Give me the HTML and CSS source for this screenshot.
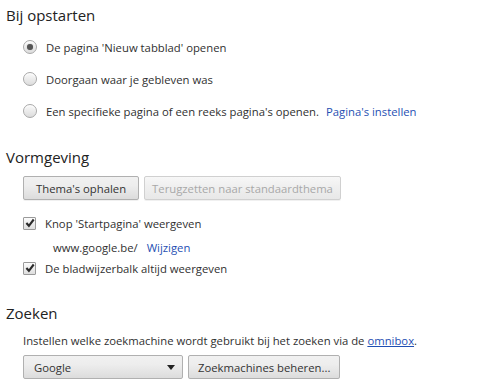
FILE: index.html
```html
<!DOCTYPE html>
<html lang="nl">
<head>
    <meta charset="UTF-8">
    <meta name="viewport" content="width=device-width, initial-scale=1.0">
    <title>Instellingen</title>
    <link rel="stylesheet" href="styles.css">
</head>
<body>
    <div class="settings">

        <section class="section section-startup">
            <h3 class="section-title">Bij opstarten</h3>
            <div class="section-body">
                <label class="radio-row">
                    <input type="radio" name="startup" checked>
                    <span>De pagina 'Nieuw tabblad' openen</span>
                </label>
                <label class="radio-row">
                    <input type="radio" name="startup">
                    <span>Doorgaan waar je gebleven was</span>
                </label>
                <label class="radio-row">
                    <input type="radio" name="startup">
                    <span>Een specifieke pagina of een reeks pagina's openen.</span>
                    <a class="link" href="#">Pagina's instellen</a>
                </label>
            </div>
        </section>

        <section class="section section-appearance">
            <h3 class="section-title">Vormgeving</h3>
            <div class="section-body">
                <div class="button-row">
                    <button class="btn">Thema's ophalen</button>
                    <button class="btn btn-reset" disabled>Terugzetten naar standaardthema</button>
                </div>
                <label class="check-row">
                    <span class="checkbox">
                        <svg width="10" height="10" viewBox="0 0 10 10"><path d="M1.4 5.0 L3.9 7.8 L8.7 1.5" fill="none" stroke="#2a2a2a" stroke-width="2.1"/></svg>
                    </span>
                    <span>Knop 'Startpagina' weergeven</span>
                </label>
                <div class="home-url">
                    <span>www.google.be/</span>
                    <a class="link" href="#">Wijzigen</a>
                </div>
                <label class="check-row check-row-last">
                    <span class="checkbox">
                        <svg width="10" height="10" viewBox="0 0 10 10"><path d="M1.4 5.0 L3.9 7.8 L8.7 1.5" fill="none" stroke="#2a2a2a" stroke-width="2.1"/></svg>
                    </span>
                    <span>De bladwijzerbalk altijd weergeven</span>
                </label>
            </div>
        </section>

        <section class="section section-search">
            <h3 class="section-title">Zoeken</h3>
            <div class="section-body">
                <p class="search-info">Instellen welke zoekmachine wordt gebruikt bij het zoeken via de <a class="link link-underline" href="#">omnibox</a>.</p>
                <div class="button-row">
                    <div class="select">
                        <span>Google</span>
                        <svg width="8" height="5" viewBox="0 0 8 5"><path d="M0 0 H8 L4 5 Z" fill="#222"/></svg>
                    </div>
                    <button class="btn btn-manage">Zoekmachines beheren...</button>
                </div>
            </div>
        </section>

    </div>
</body>
</html>
```

FILE: styles.css
```css
body {
    margin: 0;
    background: #fff;
    font-family: "Open Sans", "Noto Sans", sans-serif;
    font-size: 11.3px;
    color: #303030;
}

.settings {
    padding: 5px 6px 0 6px;
}

.section-title {
    margin: 0;
    font-size: 15px;
    font-weight: normal;
    line-height: 20px;
    color: #222;
}

.section-body {
    padding-left: 17px;
}

.section-appearance {
    margin-top: 20px;
}
.section-search {
    margin-top: 25px;
}

/* radios */
.section-startup .section-body {
    padding-top: 6px;
}
.radio-row {
    display: flex;
    align-items: center;
    height: 32px;
}
.radio-row input {
    appearance: none;
    -webkit-appearance: none;
    margin: 0 9px 0 0;
    width: 14px;
    height: 14px;
    border-radius: 50%;
    border: 1px solid #a8a8a8;
    background: linear-gradient(#fafafa, #dcdcdc);
    box-shadow: inset 0 1px 1px #fff;
    position: relative;
    flex: none;
}
.radio-row input:checked::after {
    content: "";
    position: absolute;
    left: 3px;
    top: 3px;
    width: 6px;
    height: 6px;
    border-radius: 50%;
    background: #555;
    box-shadow: 0 0 1px #999;
}
.radio-row .link {
    margin-left: 7px;
}

.link {
    color: #1f4fb3;
    text-decoration: none;
}
.link-underline {
    text-decoration: underline;
}

/* buttons */
.button-row {
    display: flex;
    gap: 5px;
    margin-top: 9px;
}
.btn {
    height: 24px;
    padding: 0 12px;
    font-family: inherit;
    font-size: 11.3px;
    color: #333;
    border: 1px solid #b0b0b0;
    border-radius: 2px;
    background: linear-gradient(#f1f1f1, #ededed 40%, #dcdcdc);
    box-shadow: 0 1px 0 rgba(0, 0, 0, 0.06);
}
.btn:disabled {
    color: #a8a8a8;
    border-color: #d0d0d0;
    background: linear-gradient(#f7f7f7, #f0f0f0 40%, #e8e8e8);
}
.btn-reset {
    padding: 0 7px;
}
.btn-manage {
    padding: 0 9px;
}

/* checkboxes */
.check-row {
    display: flex;
    align-items: center;
    height: 22px;
    margin-top: 12px;
}
.check-row-last {
    margin-top: 0;
    height: 20px;
}
.checkbox {
    display: flex;
    align-items: center;
    justify-content: center;
    width: 11px;
    height: 11px;
    margin-right: 9px;
    border: 1px solid #9a9a9a;
    border-radius: 1px;
    background: linear-gradient(#fcfcfc, #dedede);
    flex: none;
}
.home-url {
    display: flex;
    align-items: center;
    gap: 9px;
    height: 22px;
    margin-top: 2px;
    padding-left: 30px;
}

/* search */
.search-info {
    margin: 9px 0 0 0;
    line-height: 18px;
}
.section-search .button-row {
    margin-top: 5px;
}
.select {
    display: flex;
    align-items: center;
    justify-content: space-between;
    box-sizing: border-box;
    width: 160px;
    height: 24px;
    padding: 0 7px 0 10px;
    border: 1px solid #b0b0b0;
    border-radius: 2px;
    background: linear-gradient(#f1f1f1, #ededed 40%, #dcdcdc);
    color: #333;
}
```
